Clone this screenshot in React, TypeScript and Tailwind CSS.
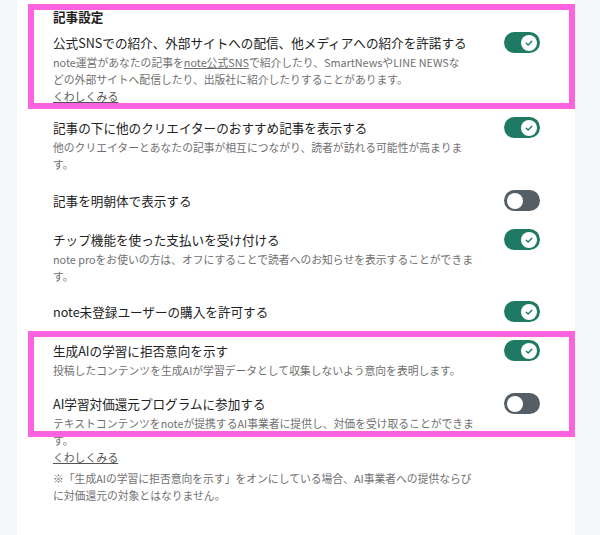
import React from "react";

const FONT = { fontFamily: '"Noto Sans CJK JP", "Noto Sans", sans-serif' };

function Toggle({ on }: { on: boolean }) {
  return (
    <div
      className={`relative flex h-[21px] w-[36px] shrink-0 items-center rounded-full px-[3px] ${
        on ? "justify-end bg-[#1f7a63]" : "justify-start bg-[#545e64]"
      }`}
    >
      <div className="flex h-[16px] w-[16px] items-center justify-center rounded-full bg-white">
        {on && (
          <svg width="10" height="10" viewBox="0 0 10 10">
            <path d="M2.2 5.2 L4.2 7 L7.8 3.2" fill="none" stroke="#1f7a63" strokeWidth="1.4" strokeLinecap="round" strokeLinejoin="round" />
          </svg>
        )}
      </div>
    </div>
  );
}

function Row({
  title,
  desc,
  on,
  link,
  className = "",
}: {
  title: string;
  desc?: React.ReactNode;
  on: boolean;
  link?: boolean;
  className?: string;
}) {
  return (
    <div className={`flex items-start justify-between ${className}`}>
      <div className="w-[428px]">
        <div className="text-[12.6px] leading-[23px] text-[#222]">{title}</div>
        {desc && <div className="text-[10.8px] leading-[17px] text-[#707070]">{desc}</div>}
        {link && (
          <div className="text-[10.8px] leading-[17px] text-[#555] underline">くわしくみる</div>
        )}
      </div>
      <div className="mt-[1px]">
        <Toggle on={on} />
      </div>
    </div>
  );
}

export default function App() {
  return (
    <div className="relative h-[535px] w-[600px] overflow-hidden bg-[#f4f6f9]" style={FONT}>
      <div className="ml-[17px] h-full w-[558px] bg-white pl-[36px] pr-[35px] pt-[7px]">
        <div className="text-[12.6px] font-bold leading-[20px] text-[#222]">記事設定</div>
        <div className="mt-[4px] flex flex-col">
          <Row
            title="公式SNSでの紹介、外部サイトへの配信、他メディアへの紹介を許諾する"
            on
            link
            desc={
              <>
                note運営があなたの記事を<span className="underline">note公式SNS</span>
                で紹介したり、SmartNewsやLINE NEWSな
                <br />
                どの外部サイトへ配信したり、出版社に紹介したりすることがあります。
              </>
            }
          />
          <Row
            className="mt-[11px]"
            title="記事の下に他のクリエイターのおすすめ記事を表示する"
            on
            desc="他のクリエイターとあなたの記事が相互につながり、読者が訪れる可能性が高まります。"
          />
          <Row className="mt-[16px]" title="記事を明朝体で表示する" on={false} />
          <Row
            className="mt-[16px]"
            title="チップ機能を使った支払いを受け付ける"
            on
            desc="note proをお使いの方は、オフにすることで読者へのお知らせを表示することができます。"
          />
          <Row className="mt-[15px]" title="note未登録ユーザーの購入を許可する" on />
          <Row
            className="mt-[16px]"
            title="生成AIの学習に拒否意向を示す"
            on
            desc="投稿したコンテンツを生成AIが学習データとして収集しないよう意向を表明します。"
          />
          <Row
            className="mt-[13px]"
            title="AI学習対価還元プログラムに参加する"
            on={false}
            link
            desc="テキストコンテンツをnoteが提携するAI事業者に提供し、対価を受け取ることができます。"
          />
        </div>
        <div className="mt-[4px] w-[428px] text-[10.8px] leading-[17px] text-[#707070]">
          ※「生成AIの学習に拒否意向を示す」をオンにしている場合、AI事業者への提供ならびに対価還元の対象とはなりません。
        </div>
      </div>
      <div className="absolute left-[28px] top-[4px] h-[105px] w-[547px] border-[6px] border-[#fd63e1]" />
      <div className="absolute left-[28px] top-[331px] h-[106px] w-[547px] border-[6px] border-[#fd63e1]" />
    </div>
  );
}
